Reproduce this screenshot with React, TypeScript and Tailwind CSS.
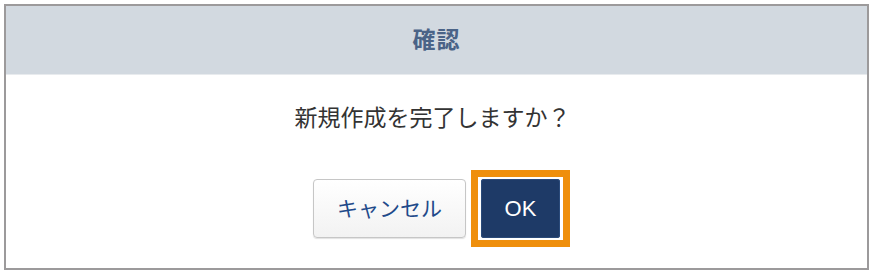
export default function App() {
  return (
    <div
      className="w-[874px] h-[280px] bg-white p-1"
      style={{ fontFamily: '"Liberation Sans", "Noto Sans CJK JP", sans-serif' }}
    >
      <div className="w-[865px] h-[266px] border-2 border-[#9c9a9b] flex flex-col">
        {/* header */}
        <div className="h-[69px] bg-[#d2d9e0] border-b border-[#e8ebee] flex items-center justify-center">
          <span className="text-[23px] font-bold text-[#4a6387] tracking-[1px]">確認</span>
        </div>

        {/* body */}
        <div className="flex-1 flex flex-col items-center pt-[27px]">
          <p className="text-[23px] leading-[32px] text-[#333333] pr-[8px]">
            新規作成を完了しますか？
          </p>
          <div className="mt-[36px] flex items-center gap-[5px] pl-[10px]">
            <button className="w-[153px] h-[59px] rounded-[4px] border border-[#c6c6c6] bg-gradient-to-b from-white to-[#f2f2f2] shadow-[0_1px_1px_rgba(0,0,0,0.12)] text-[21px] text-[#1f4a8a]">
              キャンセル
            </button>
            <div className="border-[7px] border-[#ef8f0c] bg-white px-[3px] py-[2px]">
              <button className="w-[79px] h-[59px] rounded-[3px] bg-[#1e3a67] text-white text-[22px] shadow-[inset_0_0_0_1px_#2a4a7a]">
                OK
              </button>
            </div>
          </div>
        </div>
      </div>
    </div>
  );
}
